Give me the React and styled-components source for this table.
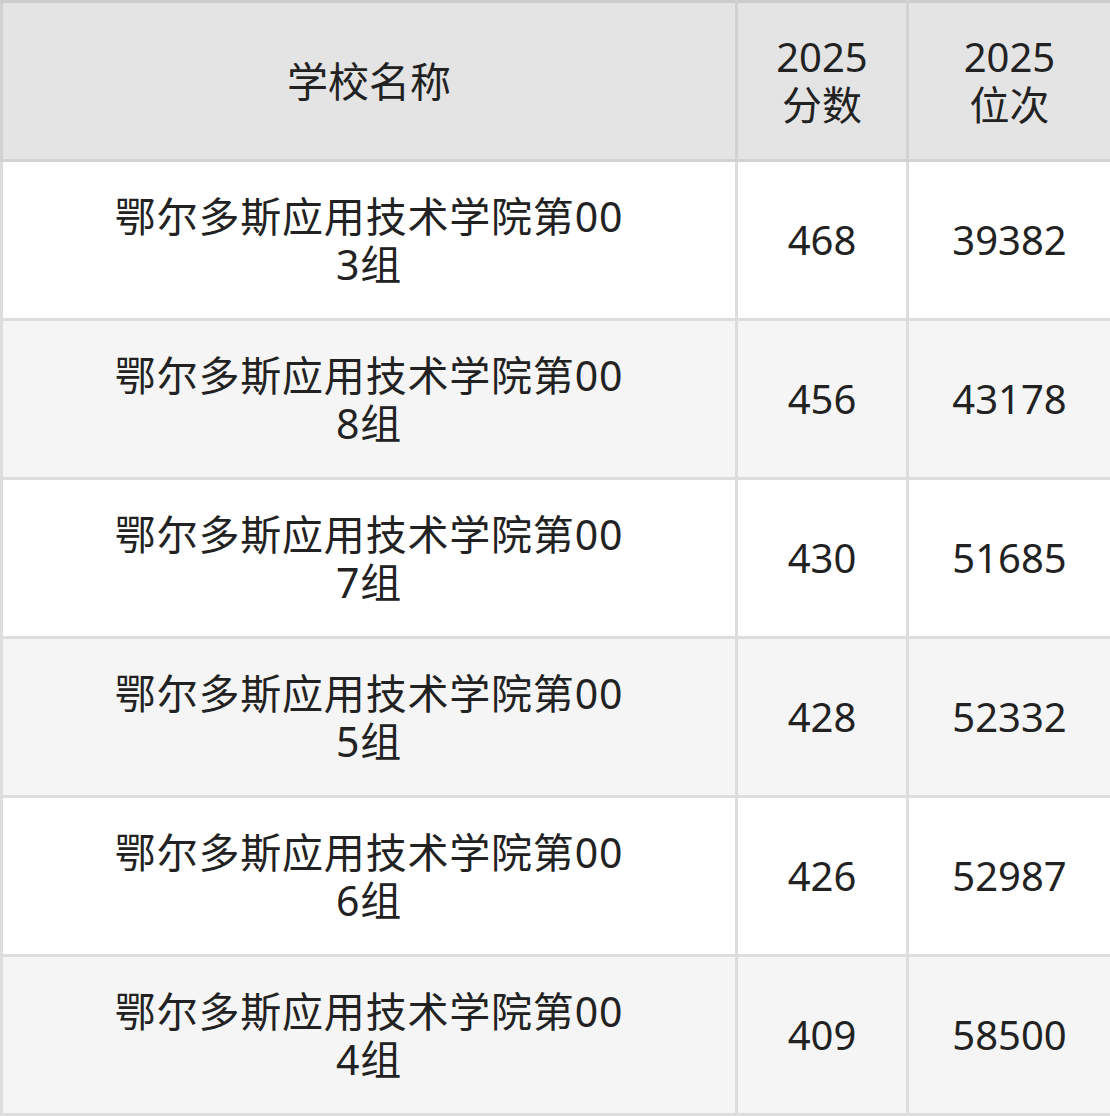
import React from "react";
import styled, { createGlobalStyle } from "styled-components";

const GlobalStyle = createGlobalStyle`
  html, body {
    margin: 0;
    padding: 0;
    background: #ffffff;
  }
  body {
    font-family: "Noto Sans", "Noto Sans CJK SC", sans-serif;
    color: #222222;
  }
`;

const Table = styled.table`
  width: 1110px;
  border-collapse: collapse;
  table-layout: fixed;
  border: 3px solid #dddddd;
`;

const HeadCell = styled.th`
  height: 156px;
  background: #e4e4e4;
  border: 3px solid #d2d2d2;
  border-top-color: #cccccc;
  font-weight: 400;
  font-size: ${(p) => (p.$wide ? "41px" : "40px")};
  line-height: 48px;
  text-align: center;
  vertical-align: middle;
  padding: 0;
  color: #222222;
`;

const Row = styled.tr`
  background: ${(p) => (p.$alt ? "#f5f5f5" : "#ffffff")};
`;

const Cell = styled.td`
  height: 156px;
  border: 3px solid #dddddd;
  font-size: ${(p) => (p.$wide ? "41px" : "40px")};
  letter-spacing: ${(p) => (p.$wide ? "0.8px" : "0")};
  line-height: 48px;
  text-align: center;
  vertical-align: middle;
  word-break: break-all;
  padding: ${(p) => (p.$wide ? "0 108px" : "0")};
  color: #222222;
`;

const rows = [
  { name: "鄂尔多斯应用技术学院第003组", score: "468", rank: "39382" },
  { name: "鄂尔多斯应用技术学院第008组", score: "456", rank: "43178" },
  { name: "鄂尔多斯应用技术学院第007组", score: "430", rank: "51685" },
  { name: "鄂尔多斯应用技术学院第005组", score: "428", rank: "52332" },
  { name: "鄂尔多斯应用技术学院第006组", score: "426", rank: "52987" },
  { name: "鄂尔多斯应用技术学院第004组", score: "409", rank: "58500" },
];

export default function App() {
  return (
    <>
      <GlobalStyle />
      <Table>
        <colgroup>
          <col style={{ width: "735px" }} />
          <col style={{ width: "171px" }} />
          <col style={{ width: "204px" }} />
        </colgroup>
        <thead>
          <tr>
            <HeadCell $wide>学校名称</HeadCell>
            <HeadCell>
              2025
              <br />
              分数
            </HeadCell>
            <HeadCell>
              2025
              <br />
              位次
            </HeadCell>
          </tr>
        </thead>
        <tbody>
          {rows.map((r, i) => (
            <Row key={i} $alt={i % 2 === 1}>
              <Cell $wide>{r.name}</Cell>
              <Cell>{r.score}</Cell>
              <Cell>{r.rank}</Cell>
            </Row>
          ))}
        </tbody>
      </Table>
    </>
  );
}
